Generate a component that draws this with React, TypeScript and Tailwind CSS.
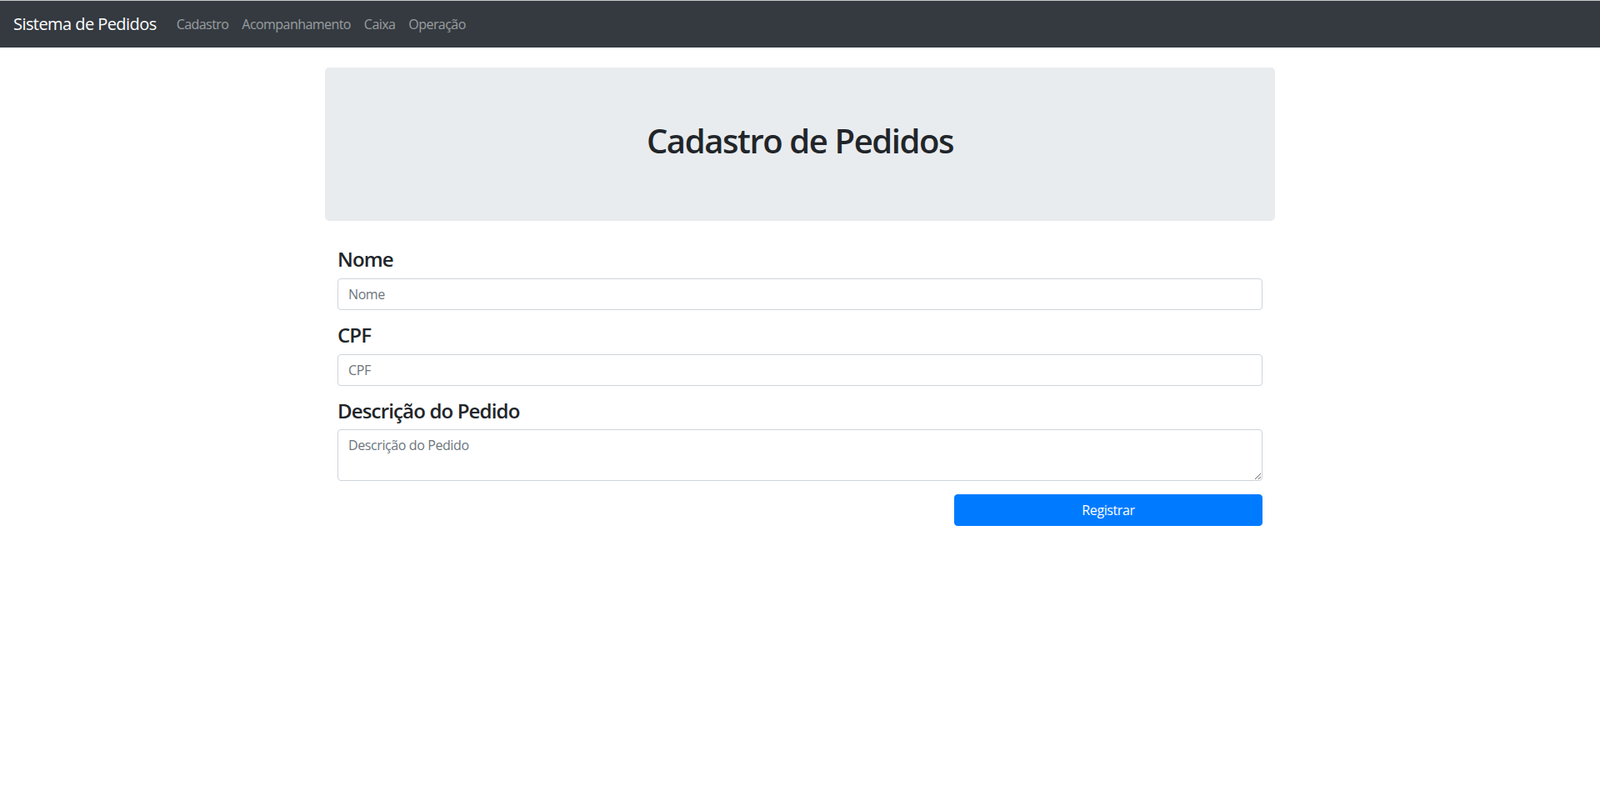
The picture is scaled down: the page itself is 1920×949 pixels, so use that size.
const font = { fontFamily: '"Open Sans", "Noto Sans", Arial, sans-serif' };

function Field({ label, children }: { label: string; children: React.ReactNode }) {
  return (
    <div className="mb-4">
      <label className="mb-2 block text-[24px] leading-[1.2] font-semibold tracking-[-0.035em] text-[#212529]">
        {label}
      </label>
      {children}
    </div>
  );
}

const inputCls =
  "block w-full rounded-[4px] border border-[#ced4da] bg-white px-3 py-1.5 text-base leading-6 tracking-[-0.025em] text-[#495057] placeholder:text-[#6c757d] outline-none";

export default function App() {
  return (
    <div className="min-h-[949px] bg-white text-[#212529]" style={font}>
      <div className="border-t border-[#c9c9c9]" />
      <nav className="flex h-14 items-center bg-[#343a40] px-4 tracking-[-0.035em]">
        <a className="mr-4 py-[5px] text-xl leading-[30px] text-white">Sistema de Pedidos</a>
        <div className="flex">
          {["Cadastro", "Acompanhamento", "Caixa", "Operação"].map((l) => (
            <a key={l} className="px-2 py-2 text-base leading-6 text-white/50">
              {l}
            </a>
          ))}
        </div>
      </nav>

      <div className="mx-auto mt-6 w-[1140px]">
        <div className="mb-8 rounded-[5px] bg-[#e9ecef] px-8 py-16">
          <h1 className="mb-2 text-center text-[40px] leading-[1.2] font-semibold tracking-[-0.035em]">
            Cadastro de Pedidos
          </h1>
        </div>

        <form className="px-[15px]">
          <Field label="Nome">
            <input className={inputCls} placeholder="Nome" />
          </Field>
          <Field label="CPF">
            <input className={inputCls} placeholder="CPF" />
          </Field>
          <Field label="Descrição do Pedido">
            <textarea className={inputCls} rows={2} placeholder="Descrição do Pedido" />
          </Field>
          <div className="flex justify-end">
            <button
              type="button"
              className="w-[370px] rounded-[4px] border border-[#007bff] bg-[#007bff] px-3 py-1.5 text-base leading-6 tracking-[-0.025em] text-white"
            >
              Registrar
            </button>
          </div>
        </form>
      </div>
    </div>
  );
}
